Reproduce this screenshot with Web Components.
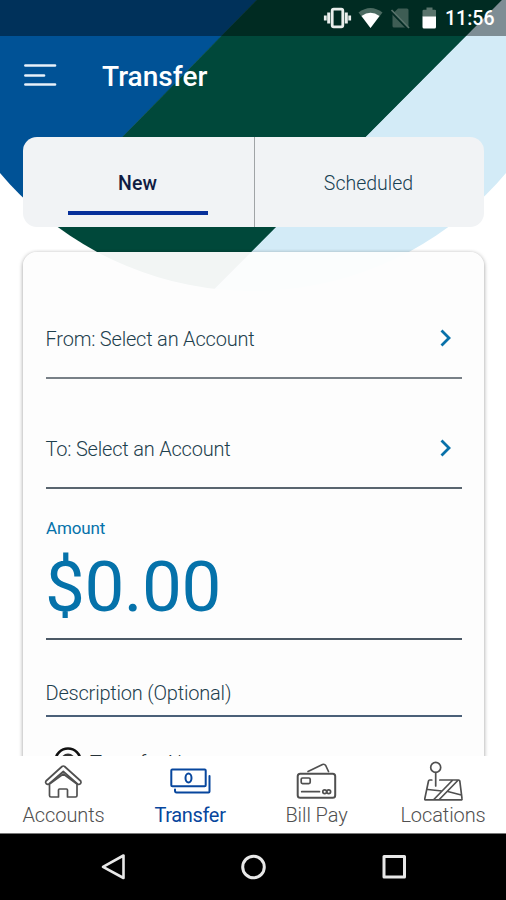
<!DOCTYPE html>
<html lang="en">
<head>
<meta charset="utf-8">
<title>Transfer</title>
<style>
html,body{margin:0;padding:0;background:#fff}
body{width:506px;height:900px;overflow:hidden;font-family:Roboto,"Liberation Sans",sans-serif}
</style>
</head>
<body>
<transfer-screen></transfer-screen>
<script>
function define(name, markup) {
  const template = document.createElement('template');
  template.innerHTML = markup;
  customElements.define(name, class extends HTMLElement {
    constructor() {
      super();
      this.attachShadow({mode: 'open'}).append(template.content.cloneNode(true));
    }
  });
}

define('brand-backdrop', `
<style>:host{display:block;position:absolute;inset:0;z-index:0}svg{display:block}</style>
<svg width="506" height="300" viewBox="0 0 506 300">
  <clipPath id="blue"><path d="M0 0H257L-37 300H0Z"/></clipPath>
  <clipPath id="green"><path d="M256.500 0H502.500L204 300H-37.500Z"/></clipPath>
  <clipPath id="light"><path d="M502 0H506V300H203.500Z"/></clipPath>
  <circle cx="253" cy="-38.6" r="329.8" fill="#005296" clip-path="url(#blue)"/>
  <circle cx="253" cy="-38.6" r="329.8" fill="#00483a" clip-path="url(#green)"/>
  <circle cx="253" cy="-38.6" r="329.8" fill="#d3ebf7" clip-path="url(#light)"/>
</svg>`);

define('status-bar', `
<style>
:host{display:flex;height:36px;background:rgba(0,0,0,.4);align-items:center;justify-content:flex-end;box-sizing:border-box;padding-right:11px;color:#fff}
svg{display:block;flex:none}
.time{font-size:19.500px;font-weight:500;line-height:38px;height:36px;margin-left:9px;width:50px;white-space:nowrap}
</style>
<svg width="114" height="36" viewBox="322 0 114 36">
  <g fill="none" stroke="#e9eeec">
    <rect x="332.200" y="9.200" width="10.600" height="17.600" rx="1.500" stroke-width="2.800"/>
    <path d="M328.700 12.500v11M346.300 12.500v11" stroke-width="3"/>
    <path d="M325.300 15.500v5M349.700 15.500v5" stroke-width="2.800"/>
  </g>
  <path d="M358.500 12.500Q370.500 3.500 382.500 12.500L370.500 28Z" fill="#4c6b62"/>
  <path d="M361.500 16Q370.500 9.500 379.500 16L370.500 28Z" fill="#fff"/>
  <path d="M398 8.500H407Q408.500 8.500 408.500 10V26Q408.500 27.500 407 27.500H394Q392.500 27.500 392.500 26V14Z" fill="#3e5d54"/>
  <path d="M391 11.500L407.500 28.500" stroke="#032b24" stroke-width="2.500"/>
  <path d="M391.500 10L409 28" stroke="#58726a" stroke-width="1.700"/>
  <path d="M426.500 7.500h6v2.200h2.500q1.200 0 1.200 1.300V17H422.500V11q0-1.300 1.300-1.300h2.700Z" fill="#5a746c"/>
  <path d="M422.500 16.500H436V27q0 1.500-1.500 1.500H424q-1.500 0-1.500-1.500Z" fill="#fff"/>
</svg>
<span class="time">11:56</span>`);

define('app-bar', `
<style>
:host{display:flex;height:101px;box-sizing:border-box;padding:24px 0 0 24px;gap:45px;align-items:flex-start}
svg{display:block;margin-top:3px}
h1{margin:0;font-size:28px;line-height:34px;font-weight:500;color:#fff;letter-spacing:.04px}
</style>
<svg width="33" height="24" viewBox="0 0 33 24" stroke="#e8f1fa" stroke-width="2.700" stroke-linecap="round"><path d="M1.400 2.500H31M1.400 12.500H20M1.400 21.500H31"/></svg>
<h1><slot></slot></h1>`);

define('tab-item', `
<style>
:host{display:flex;flex:none;width:229px;flex-direction:column;align-items:center;box-sizing:border-box;padding:35px 2px 0 0;font-size:19.500px;line-height:24px;font-weight:300;color:#183f52}
:host([selected]){width:232px;font-weight:500;color:#101c43;border-right:1px solid #a0a4a6}
i{display:none;width:140px;height:4px;background:#07309a;margin-top:15px}
:host([selected]) i{display:block}
</style><span><slot></slot></span><i></i>`);

define('tab-strip', `
<style>:host{display:flex;height:90px;margin:0 22px 0 23px;background:#f1f3f5;border-radius:14px;overflow:hidden}</style><slot></slot>`);

define('form-card', `
<style>
:host{display:block;box-sizing:border-box;height:507px;margin-top:22px;padding:3px 20px 0;overflow:hidden}
div{height:560px;margin:0 2px 0 3px;box-sizing:border-box;padding:0 22px 0 23px;border-radius:14px;background:rgba(253,253,253,.956);box-shadow:0 1px 4px rgba(0,0,0,.4)}
</style><div><slot></slot></div>`);

define('form-row', `
<style>
:host{display:flex;box-sizing:border-box;border-bottom:2px solid #59656f;justify-content:space-between;align-items:flex-end;padding:0 9px 24px 0;font-size:20px;line-height:28px;font-weight:300;color:#1e404d;letter-spacing:-.2px}
span{margin-left:-.5px}
svg{display:none;margin-bottom:5px}
:host([link]) svg{display:block}
</style><span><slot></slot></span>
<svg width="14" height="20" viewBox="0 0 14 20" fill="none" stroke="#0871a9" stroke-width="2.800"><path d="M2.500 2.500L10 10L2.500 17.500"/></svg>`);

define('amount-field', `
<style>
:host{display:flex;flex-direction:column;height:151px;box-sizing:border-box;padding-top:27px;border-bottom:2px solid #4c5966;color:#0572aa}
label{font-size:17px;line-height:24px;letter-spacing:-.15px}
span{font-size:71px;line-height:84px;white-space:nowrap;margin:5px 0 0 -1px;letter-spacing:-.5px}
</style><label>Amount</label><span>$0.00</span>`);

define('choice-row', `
<style>
:host{display:flex;align-items:flex-start;gap:8px;padding:28px 0 0 8px;color:#263238;font-size:20px;line-height:28px;font-weight:300}
span{margin-top:4px}
</style>
<svg width="28" height="28" viewBox="0 0 28 28"><circle cx="14" cy="16" r="12.500" fill="none" stroke="#111" stroke-width="2.600"/><circle cx="14" cy="16" r="7.500" fill="#333"/></svg>
<span><slot></slot></span>`);

define('nav-item', `
<style>
:host{display:flex;flex:1;flex-direction:column;align-items:center;color:#505050;font-size:20px;line-height:24px;font-weight:300;white-space:nowrap;letter-spacing:-.1px}
:host([selected]){color:#07469d;font-weight:400;letter-spacing:-.35px}
span{margin-left:.5px}
svg{display:none;width:42px;height:42px;margin-top:5px;fill:none;stroke:currentColor;stroke-width:1.700;stroke-linejoin:round;stroke-linecap:round}
:host([icon=home]) .home,:host([icon=cash]) .cash,:host([icon=card]) .card,:host([icon=map]) .map{display:block}
</style>
<svg class="home" viewBox="0 0 42 42"><path d="M20 5.500Q21.300 4.500 22.600 5.500L38.700 20Q39.500 21.500 38.500 22.700Q37 24 35.500 23L21.300 10.500L7 23Q5.500 24 4.200 22.700Q3 21.200 4 20Z"/><path d="M7.500 23V34.500Q7.500 36 9 36H16.500V29Q16.500 28 17.500 28H24.500Q25.500 28 25.500 29V36H33.500Q35 36 35 34.500V23L21.300 13Z"/></svg>
<svg class="cash" viewBox="0 0 42 42"><g stroke-width="2"><rect x="2.300" y="8.500" width="34.400" height="16.700" rx="1"/><ellipse cx="19.500" cy="17" rx="3" ry="4.400"/><path d="M40.500 15V30.500Q40.500 31.500 39.500 31.500H7.500Q6 31.500 6 29.500V28.500"/></g></svg>
<svg class="card" viewBox="0 0 42 42"><rect x="2.700" y="12.700" width="37.500" height="24" rx="2.500" stroke-width="2"/><rect x="6.200" y="17" width="9" height="5.600" rx="1.300"/><path d="M13 10.500L27.500 3.500Q29.500 2.700 30.700 4.500L33.500 10.500M6.700 30.700H24.500"/><circle cx="29.700" cy="30.700" r="1.900"/><circle cx="33.700" cy="30.700" r="1.900"/></svg>
<svg class="map" viewBox="0 0 42 42"><circle cx="13.700" cy="6.400" r="5"/><path d="M13.700 11.500V25M9.800 19H7.600Q6.800 19 6.500 20L2.800 37.700Q2.600 38.900 3.800 38.900H38.800Q40.300 38.900 40 37.700L37.800 20Q37.600 19 36.600 19H17.800M5.800 28.500L20 30M30.300 19.500L11.800 38.500M35.800 19.500L17.300 38.500M25.800 30.500L39.300 34"/></svg>
<span><slot></slot></span>`);

define('bottom-nav', `
<style>:host{display:flex;height:78px;background:#fff}</style><slot></slot>`);

define('system-nav', `
<style>:host{display:block;box-sizing:border-box;height:67px;background:#000;border-top:1px solid #777;margin-top:-1px}svg{display:block}</style>
<svg width="506" height="66" viewBox="0 834 506 66" fill="none" stroke="#e8e8e8" stroke-width="3" stroke-linejoin="round"><path d="M123.500 855.500V878L103 866.800Z" stroke-width="2.600"/><circle cx="253.500" cy="867" r="10.800"/><rect x="384" y="856.500" width="20.500" height="20.500"/></svg>`);

define('transfer-screen', `
<style>
:host{display:block;position:relative;width:506px;height:900px;overflow:hidden;background:#fff}
main{position:relative;z-index:1;display:flex;flex-direction:column}
.from{height:127px;border-color:#788087}
.to{height:110px}
.desc{height:77px;padding-bottom:8px;border-color:#4b6078}
</style>
<brand-backdrop></brand-backdrop>
<main>
  <status-bar></status-bar>
  <app-bar>Transfer</app-bar>
  <tab-strip><tab-item selected>New</tab-item><tab-item>Scheduled</tab-item></tab-strip>
  <form-card>
    <form-row class="from" link>From: Select an Account</form-row>
    <form-row class="to" link>To: Select an Account</form-row>
    <amount-field></amount-field>
    <form-row class="desc">Description (Optional)</form-row>
    <choice-row>Transfer Now</choice-row>
  </form-card>
  <bottom-nav>
    <nav-item icon="home">Accounts</nav-item>
    <nav-item icon="cash" selected>Transfer</nav-item>
    <nav-item icon="card">Bill Pay</nav-item>
    <nav-item icon="map">Locations</nav-item>
  </bottom-nav>
  <system-nav></system-nav>
</main>`);
</script>
</body>
</html>
